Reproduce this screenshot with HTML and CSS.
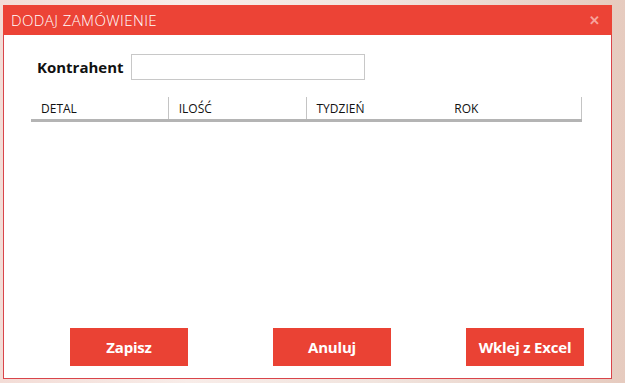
FILE: index.html
```html
<!DOCTYPE html>
<html lang="pl">
<head>
  <meta charset="UTF-8">
  <title>Dodaj zamówienie</title>
  <link rel="stylesheet" href="styles.css">
</head>
<body>
  <div class="window">
    <div class="title-bar">
      <span class="title">DODAJ ZAMÓWIENIE</span>
      <span class="close">&#x2715;</span>
    </div>
    <div class="content">
      <div class="field-row">
        <label class="field-label" for="kontrahent">Kontrahent</label>
        <input type="text" class="field-input" id="kontrahent">
      </div>

      <div class="grid-header">
        <div class="grid-col">DETAL</div>
        <div class="grid-col">ILOŚĆ</div>
        <div class="grid-col no-line">TYDZIEŃ</div>
        <div class="grid-col">ROK</div>
      </div>
      <div class="grid-body"></div>

      <div class="button-row">
        <button class="btn btn-save">Zapisz</button>
        <button class="btn btn-cancel">Anuluj</button>
        <button class="btn btn-paste">Wklej z Excel</button>
      </div>
    </div>
  </div>
</body>
</html>
```

FILE: styles.css
```css
* {
  margin: 0;
  padding: 0;
  box-sizing: border-box;
  font-family: 'Open Sans', 'Noto Sans', sans-serif;
}

body {
  width: 625px;
  height: 383px;
  overflow: hidden;
  padding: 5px 13px 4px 3px;
  background: linear-gradient(90deg, #f3dcd6 0%, #f8ece8 30%, #f1e4de 60%, #e6cbbf 100%);
}

.window {
  display: flex;
  flex-direction: column;
  height: 100%;
  background-color: #fff;
  border: 1px solid #d9444a;
  border-top: none;
}

.title-bar {
  display: flex;
  justify-content: space-between;
  align-items: center;
  height: 30px;
  background-color: #ec4336;
  color: #fff;
  padding: 0 12px 0 8px;
  margin: 0 -1px;
}

.title {
  font-size: 15px;
  font-weight: 300;
  letter-spacing: 0.4px;
}

.close {
  font-size: 13px;
  color: #f7a49d;
  font-weight: bold;
}

.content {
  flex: 1;
  display: flex;
  flex-direction: column;
  padding: 19px 27px 12px 27px;
}

.field-row {
  display: flex;
  align-items: center;
  gap: 7px;
  padding-left: 6px;
}

.field-label {
  font-size: 15px;
  font-weight: bold;
  color: #111;
}

.field-input {
  width: 234px;
  height: 26px;
  border: 1px solid #c8c8c8;
  background: #fff;
}

.grid-header {
  display: flex;
  margin-top: 17px;
  margin-right: 2px;
  height: 25px;
  border-bottom: 3px solid #b4b4b4;
}

.grid-col {
  flex: 1;
  font-size: 12px;
  color: #111;
  padding: 3px 10px 0;
  border-right: 1px solid #c4c4c4;
}

.grid-col.no-line {
  border-right-color: transparent;
}

.grid-body {
  flex: 1;
}

.button-row {
  display: flex;
}

.btn {
  flex-shrink: 0;
  width: 118px;
  height: 38px;
  border: none;
  background-color: #ea4234;
  color: #fff;
  font-size: 15px;
  font-weight: bold;
  letter-spacing: -0.2px;
}

.btn-save {
  margin-left: 39px;
}

.btn-cancel {
  margin-left: 85px;
}

.btn-paste {
  margin-left: 75px;
}
```
